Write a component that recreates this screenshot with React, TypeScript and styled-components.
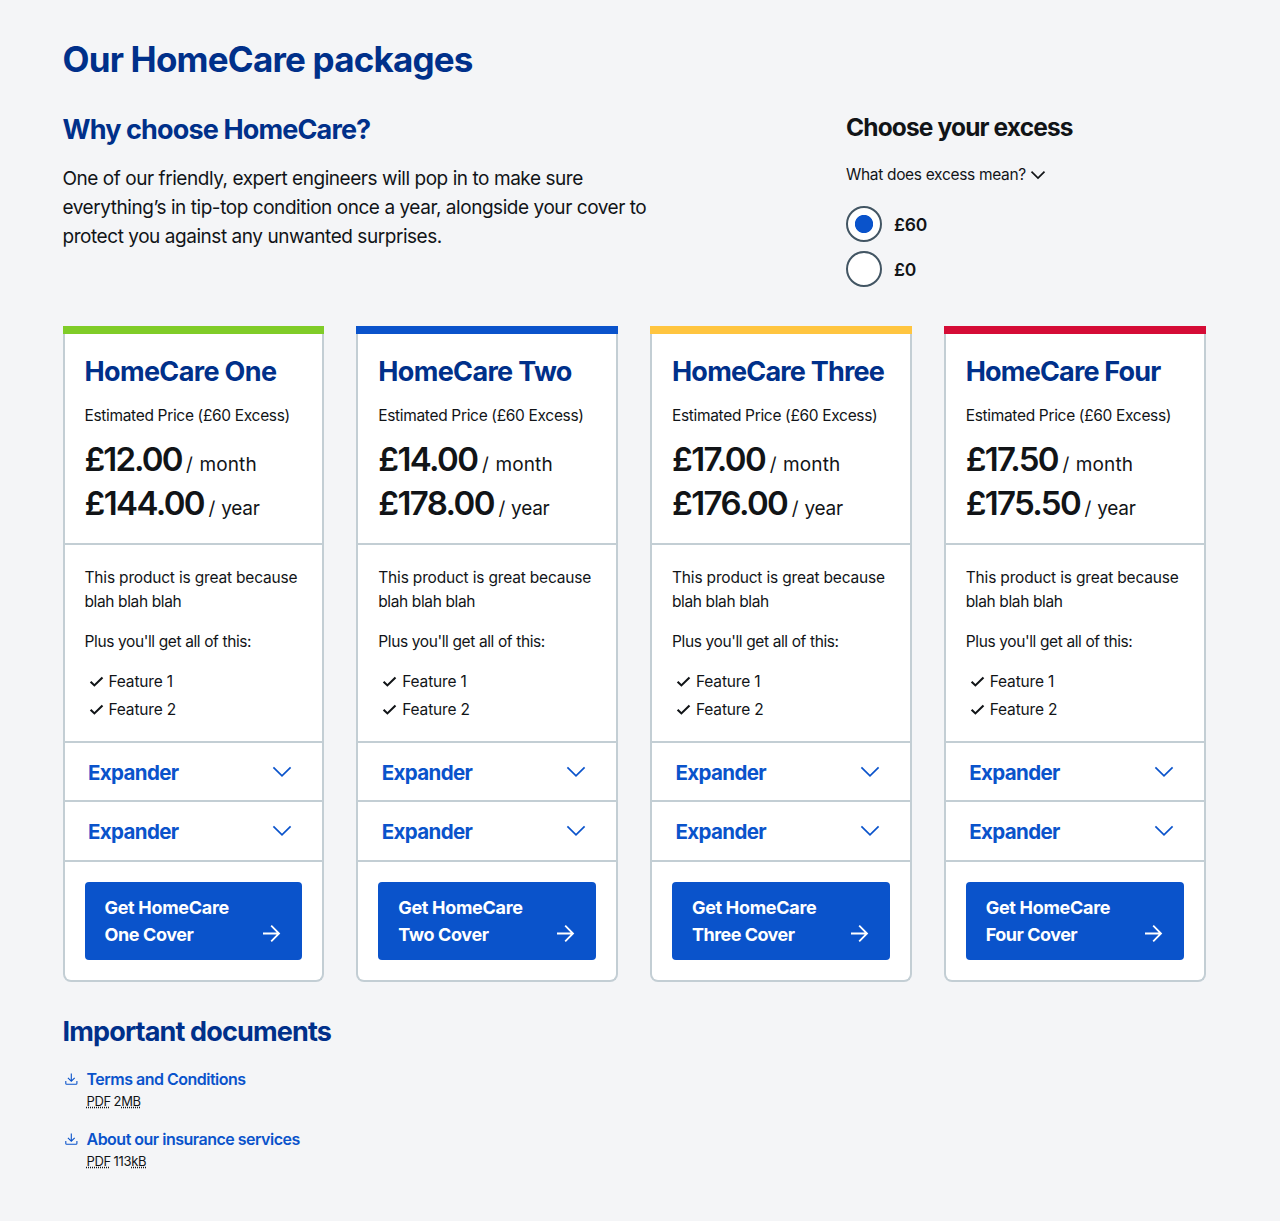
import React, { useState } from "react";
import styled, { createGlobalStyle, css } from "styled-components";

const ink = "#111417";
const navy = "#00308a";
const blue = "#0a53cb";
const line = "#c3ced4";

const Global = createGlobalStyle`
  *, *::before, *::after { box-sizing: border-box; }
  body {
    margin: 0;
    background: #f4f5f7;
    color: ${ink};
    font-family: Inter, "Liberation Sans", sans-serif;
  }
  h1, h2, h3, p, ul { margin: 0; padding: 0; }
  ul { list-style: none; }
`;

const tracking = css<{ $track?: number }>`
  letter-spacing: ${({ $track = 0 }) => $track}px;
  white-space: nowrap;
`;

const Page = styled.main`
  min-height: 1221px;
  padding: 37px 74.5px 40px 62.5px;
`;

const Title = styled.h1`
  font-size: 35px;
  line-height: 44px;
  font-weight: 650;
  letter-spacing: -0.8px;
  color: ${navy};
`;

const Intro = styled.section`
  display: flex;
  justify-content: space-between;
  margin: 30px 0 39px;
`;

const Why = styled.div`
  width: 620px;
`;

const Heading = styled.h2<{ $track?: number }>`
  font-size: 27px;
  line-height: 37px;
  font-weight: 650;
  color: ${navy};
  ${tracking}
`;

const Lead = styled.p`
  margin-top: 16px;
  font-size: 19px;
  line-height: 29px;
  letter-spacing: -0.45px;
`;

const Excess = styled.div`
  width: 359.5px;
`;

const ExcessTitle = styled.h3`
  font-size: 24.5px;
  line-height: 32px;
  font-weight: 650;
  letter-spacing: -0.86px;
`;

const ExcessHelp = styled.button`
  display: flex;
  align-items: center;
  gap: 4px;
  margin: 20px 0 19px;
  padding: 0;
  border: 0;
  background: none;
  color: inherit;
  font: 400 15.5px/24px Inter, "Liberation Sans", sans-serif;
  letter-spacing: -0.32px;
`;

const Options = styled.div`
  display: flex;
  flex-direction: column;
  gap: 9px;
`;

const Option = styled.label`
  display: flex;
  align-items: center;
  gap: 12px;
  height: 36px;
  font-size: 17.5px;
  line-height: 34px;
  font-weight: 600;
  letter-spacing: -0.2px;

  span { padding-top: 1px; }
`;

const Radio = styled.input`
  appearance: none;
  width: 36px;
  height: 36px;
  margin: 0;
  border: 2px solid #425563;
  border-radius: 50%;
  background: #fff;

  &:checked {
    background: radial-gradient(circle, ${blue} 8.7px, #fff 9.5px);
  }
`;

const Cards = styled.section`
  display: grid;
  grid-template-columns: repeat(4, 1fr);
  gap: 32px;
`;

const Card = styled.article<{ $accent: string }>`
  &::before {
    content: "";
    display: block;
    height: 8px;
    background: ${({ $accent }) => $accent};
  }
`;

const CardFrame = styled.div`
  border: 2px solid ${line};
  border-top: 0;
  border-radius: 0 0 8px 8px;
  background: #fff;
`;

const Summary = styled.div`
  padding: 19px 20px 18px;
`;

const Estimate = styled.p`
  margin: 14px 0 9px;
  font-size: 15.5px;
  line-height: 24px;
  letter-spacing: -0.33px;
  white-space: nowrap;
`;

const Price = styled.p`
  display: flex;
  align-items: baseline;
  gap: 4.5px;
  height: 44px;
  line-height: 44px;
`;

const Amount = styled.strong<{ $track?: number }>`
  font-size: 33px;
  font-weight: 600;
  ${tracking}
`;

const Period = styled.span<{ $track?: number }>`
  font-size: 19px;
  word-spacing: 1px;
  ${tracking}
`;

const Details = styled.div`
  padding: 21px 0 19px 20px;
  border-top: 2px solid ${line};
  font-size: 15.5px;
  line-height: 24px;
`;

const Pitch = styled.p<{ $track?: number }>`
  ${tracking}
`;

const Perks = styled(Pitch)`
  margin-top: 16px;
`;

const Features = styled.ul`
  display: flex;
  flex-direction: column;
  gap: 4px;
  margin-top: 16px;
`;

const Feature = styled.li`
  display: flex;
  align-items: center;
  gap: 4px;
  padding-left: 4px;
  letter-spacing: -0.18px;
`;

const Expander = styled.button`
  display: flex;
  align-items: center;
  justify-content: space-between;
  width: 100%;
  height: 59.25px;
  padding: 0 30px 0 23.5px;
  border: 0;
  border-top: 2px solid ${line};
  background: none;
  color: ${blue};
  font: 650 20.5px/28px Inter, "Liberation Sans", sans-serif;
  letter-spacing: -0.65px;

  span { padding-top: 2px; }
`;

const CtaArea = styled.div`
  padding: 20px;
  border-top: 2px solid ${line};
`;

const Cta = styled.button`
  display: flex;
  align-items: flex-end;
  justify-content: space-between;
  width: 100%;
  height: 78px;
  padding: 12px 20px;
  border: 0;
  border-radius: 4px;
  background: ${blue};
  color: #fff;
  text-align: left;
  font: 650 18px/27px Inter, "Liberation Sans", sans-serif;
`;

const CtaLine = styled.span<{ $track?: number }>`
  display: block;
  ${tracking}
`;

const Documents = styled.section`
  margin-top: 31px;
`;

const DocumentList = styled.ul`
  display: flex;
  flex-direction: column;
  gap: 16px;
  margin-top: 17px;
`;

const DocumentItem = styled.li`
  display: flex;
  gap: 8px;
`;

const DocumentLink = styled.a`
  display: block;
  color: ${blue};
  font-size: 16px;
  line-height: 24px;
  font-weight: 600;
  letter-spacing: -0.505px;
`;

const FileInfo = styled.span`
  display: block;
  font-size: 13px;
  line-height: 20px;
  letter-spacing: -0.3px;
  word-spacing: -0.8px;

  abbr { text-decoration: underline dotted; }
`;

const Chevron = () => (
  <svg width="16" height="16" viewBox="0 0 16 16" fill="none" stroke="currentColor" strokeWidth="1.7">
    <path d="M1.5 4.7 8 11.1 14.5 4.7" />
  </svg>
);

const WideChevron = () => (
  <svg width="20" height="20" viewBox="0 0 20 20" fill="none" stroke="currentColor" strokeWidth="1.7">
    <path d="M1.4 5.4 10 13.8 18.6 5.4" />
  </svg>
);

const Tick = () => (
  <svg width="16" height="16" viewBox="0 0 16 16" fill="none" stroke="currentColor" strokeWidth="2.1">
    <path d="M1.6 7.7 5.4 11.4 13.5 3.4" />
  </svg>
);

const Arrow = () => (
  <svg width="20" height="27" viewBox="0 0 20 27" fill="none" stroke="currentColor" strokeWidth="1.8">
    <path d="M1 12.5H17M9.2 4.7 17 12.5 9.2 20.3" />
  </svg>
);

const Download = () => (
  <svg width="16" height="24" viewBox="0 0 16 24" fill="none" stroke={blue} strokeWidth="1.1">
    <path d="M8.3 6.5V14M4.9 10.9 8.3 14.2 11.7 10.9M2.8 14V16.4Q2.8 17.3 3.7 17.3H13Q13.9 17.3 13.9 16.4V14" />
  </svg>
);

const packages = [
  { name: "One", accent: "#80cc28", title: -0.65, month: "£12.00", year: "£144.00", mTrack: -1.9, yTrack: -1.6, cta: -0.4 },
  { name: "Two", accent: "#0a53cb", title: -0.66, month: "£14.00", year: "£178.00", mTrack: -1.58, yTrack: -1.6, cta: -0.36 },
  { name: "Three", accent: "#ffc540", title: -0.8, month: "£17.00", year: "£176.00", mTrack: -1.6, yTrack: -1.6, cta: -0.53 },
  { name: "Four", accent: "#d50c36", title: -0.82, month: "£17.50", year: "£175.50", mTrack: -1.7, yTrack: -1.7, cta: -0.5 },
];

const documents = [
  { name: "Terms and Conditions", size: "2", unit: "MB" },
  { name: "About our insurance services", size: "113", unit: "kB" },
];

export default function App() {
  const [excess, setExcess] = useState(60);
  return (
    <Page>
      <Global />
      <Title>Our HomeCare packages</Title>
      <Intro>
        <Why>
          <Heading $track={-0.86}>Why choose HomeCare?</Heading>
          <Lead>
            One of our friendly, expert engineers will pop in to make sure
            <br />
            everything’s in tip-top condition once a year, alongside your cover to
            <br />
            protect you against any unwanted surprises.
          </Lead>
        </Why>
        <Excess>
          <ExcessTitle>Choose your excess</ExcessTitle>
          <ExcessHelp>
            What does excess mean?
            <Chevron />
          </ExcessHelp>
          <Options>
            {[60, 0].map((value) => (
              <Option key={value}>
                <Radio type="radio" name="excess" checked={excess === value} onChange={() => setExcess(value)} />
                <span>£{value}</span>
              </Option>
            ))}
          </Options>
        </Excess>
      </Intro>
      <Cards>
        {packages.map((p) => (
          <Card key={p.name} $accent={p.accent}>
            <CardFrame>
              <Summary>
                <Heading $track={p.title}>HomeCare {p.name}</Heading>
                <Estimate>Estimated Price (£60 Excess)</Estimate>
                <Price>
                  <Amount $track={p.mTrack}>{p.month}</Amount>
                  <Period $track={0.12}>/ month</Period>
                </Price>
                <Price>
                  <Amount $track={p.yTrack}>{p.year}</Amount>
                  <Period $track={-0.25}>/ year</Period>
                </Price>
              </Summary>
              <Details>
                <Pitch $track={-0.18}>This product is great because</Pitch>
                <Pitch $track={-0.38}>blah blah blah</Pitch>
                <Perks $track={-0.38}>Plus you'll get all of this:</Perks>
                <Features>
                  <Feature><Tick />Feature 1</Feature>
                  <Feature><Tick />Feature 2</Feature>
                </Features>
              </Details>
              <Expander><span>Expander</span><WideChevron /></Expander>
              <Expander><span>Expander</span><WideChevron /></Expander>
              <CtaArea>
                <Cta>
                  <span>
                    <CtaLine $track={-0.31}>Get HomeCare</CtaLine>
                    <CtaLine $track={p.cta}>{p.name} Cover</CtaLine>
                  </span>
                  <Arrow />
                </Cta>
              </CtaArea>
            </CardFrame>
          </Card>
        ))}
      </Cards>
      <Documents>
        <Heading $track={-0.85}>Important documents</Heading>
        <DocumentList>
          {documents.map((d) => (
            <DocumentItem key={d.name}>
              <Download />
              <div>
                <DocumentLink>{d.name}</DocumentLink>
                <FileInfo>
                  <abbr title="Portable Document Format">PDF</abbr> {d.size}
                  <abbr>{d.unit}</abbr>
                </FileInfo>
              </div>
            </DocumentItem>
          ))}
        </DocumentList>
      </Documents>
    </Page>
  );
}
